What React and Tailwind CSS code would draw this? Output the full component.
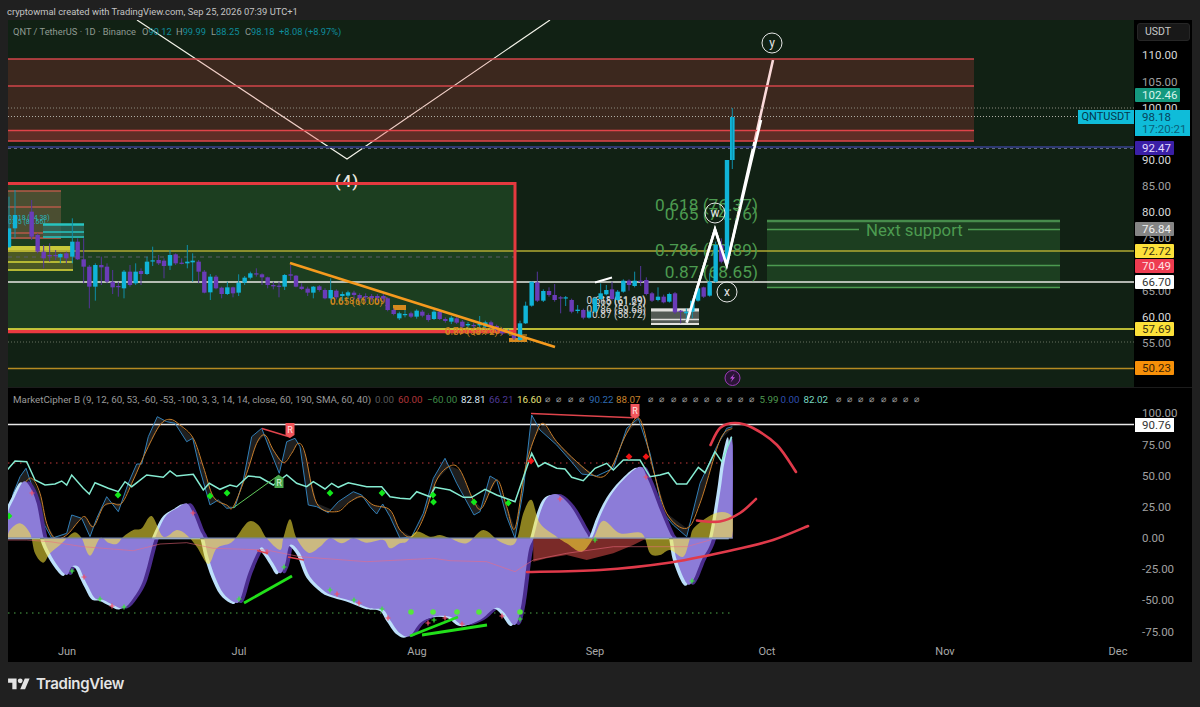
import React from 'react';

// zoomed crops were read at 3x, so points below are kept in crop coords and mapped back to the page
const left = (pts) => pts.map(([x, y]) => [x / 3, 390 + y / 3]);
const mid = (pts) => pts.map(([x, y]) => [400 + x / 3, 390 + y / 3]);
const toPoints = (pts) => pts.map(([x, y]) => `${x.toFixed(1)},${y.toFixed(1)}`).join(' ');

// catmull-rom through the points, the indicator curves are rounded in the picture
const smooth = (pts) => {
  let d = `M${pts[0][0].toFixed(1)},${pts[0][1].toFixed(1)}`;
  for (let i = 0; i < pts.length - 1; i++) {
    const p0 = pts[i - 1] || pts[i];
    const p1 = pts[i];
    const p2 = pts[i + 1];
    const p3 = pts[i + 2] || p2;
    const c1x = p1[0] + (p2[0] - p0[0]) / 6;
    const c1y = p1[1] + (p2[1] - p0[1]) / 6;
    const c2x = p2[0] - (p3[0] - p1[0]) / 6;
    const c2y = p2[1] - (p3[1] - p1[1]) / 6;
    d += ` C${c1x.toFixed(1)},${c1y.toFixed(1)} ${c2x.toFixed(1)},${c2y.toFixed(1)} ${p2[0].toFixed(1)},${p2[1].toFixed(1)}`;
  }
  return d;
};

const CYAN = '#10b4d8';
const PURPLE = '#6a3cb8';

// [x, bodyTop, bodyBottom, wickTop, wickBottom, up?]
const candlesLeft = [
  [27, 175, 232, 80, 232, 1], [45, 135, 175, 60, 205, 1], [95, 125, 200, 90, 210, 0], [113, 195, 245, 190, 250, 0],
  [131, 245, 265, 225, 295, 0], [149, 255, 258, 220, 275, 0], [167, 255, 258, 240, 270, 0], [181, 252, 262, 250, 280, 1],
  [199, 250, 265, 245, 280, 0], [217, 215, 260, 145, 280, 1], [233, 215, 268, 205, 270, 0], [251, 268, 290, 205, 340, 0],
  [268, 290, 350, 285, 415, 0], [286, 285, 350, 280, 392, 1], [304, 285, 292, 260, 345, 0], [321, 290, 335, 280, 340, 0],
  [338, 335, 352, 300, 372, 0], [355, 348, 351, 335, 380, 0], [372, 305, 355, 300, 385, 1], [390, 305, 345, 285, 350, 0],
  [407, 305, 340, 280, 345, 1], [423, 303, 312, 295, 345, 0], [441, 275, 312, 260, 315, 1], [458, 271, 274, 230, 288, 1],
  [476, 270, 280, 255, 285, 0], [492, 272, 288, 265, 325, 0], [510, 255, 287, 240, 300, 1], [527, 253, 280, 250, 285, 0],
  [545, 278, 281, 265, 283, 0], [562, 275, 280, 225, 295, 1], [578, 272, 277, 250, 335, 1], [596, 275, 305, 270, 340, 0],
  [613, 305, 368, 300, 370, 0], [631, 320, 367, 312, 390, 1], [648, 320, 355, 315, 358, 0], [665, 353, 372, 350, 385, 0],
  [682, 352, 372, 335, 375, 1], [699, 352, 370, 350, 382, 0], [716, 338, 368, 313, 378, 1], [734, 323, 338, 318, 345, 1],
  [751, 310, 323, 305, 328, 1], [769, 310, 313, 295, 320, 0], [786, 313, 322, 310, 345, 0], [803, 322, 345, 320, 355, 0],
  [820, 345, 349, 335, 358, 0], [837, 347, 350, 335, 382, 0], [854, 315, 350, 312, 360, 1], [872, 313, 317, 285, 330, 0],
  [888, 317, 350, 315, 352, 0], [905, 350, 357, 340, 360, 0], [923, 356, 368, 350, 378, 0], [940, 350, 368, 348, 385, 1],
  [958, 349, 360, 345, 365, 0], [975, 360, 385, 355, 388, 0], [992, 360, 385, 325, 390, 1], [1009, 362, 382, 358, 388, 0],
  [1027, 372, 378, 365, 392, 1], [1044, 367, 377, 362, 385, 1], [1062, 368, 375, 362, 388, 0], [1079, 375, 385, 370, 392, 0],
  [1097, 378, 382, 370, 395, 0], [1115, 378, 384, 372, 395, 0], [1132, 378, 384, 372, 395, 0], [1150, 378, 386, 372, 395, 0],
  [1163, 385, 420, 382, 424, 0], [1181, 420, 432, 415, 436, 0], [1198, 430, 445, 425, 450, 1],
];

const candlesMid = [
  [15, 432, 435, 420, 442, 1], [33, 430, 440, 425, 444, 0], [50, 422, 440, 418, 446, 1], [67, 425, 437, 420, 442, 0],
  [85, 435, 450, 430, 455, 0], [102, 425, 447, 420, 450, 1], [119, 425, 447, 420, 450, 0], [136, 447, 453, 442, 458, 0],
  [154, 443, 455, 438, 462, 1], [170, 445, 458, 440, 462, 0], [187, 455, 470, 450, 474, 0], [204, 462, 466, 456, 472, 1],
  [221, 465, 468, 458, 474, 0], [239, 462, 466, 438, 472, 1], [256, 457, 470, 452, 474, 1], [273, 457, 472, 452, 476, 0],
  [290, 468, 480, 464, 484, 0], [307, 478, 490, 474, 495, 0], [325, 484, 488, 478, 494, 1], [342, 490, 505, 486, 510, 0],
  [360, 460, 510, 452, 512, 1], [377, 407, 460, 395, 462, 1], [395, 335, 407, 335, 410, 1], [412, 337, 392, 305, 396, 0],
  [430, 363, 392, 358, 396, 1], [447, 363, 375, 352, 380, 0], [464, 375, 390, 342, 395, 0], [482, 382, 385, 378, 430, 0],
  [497, 382, 385, 378, 408, 1], [515, 390, 425, 386, 430, 0], [533, 419, 423, 405, 430, 1], [550, 420, 443, 416, 448, 0],
  [567, 425, 443, 420, 446, 1], [585, 385, 425, 380, 430, 1], [602, 370, 387, 340, 390, 1], [619, 360, 373, 345, 376, 1],
  [636, 358, 387, 335, 392, 0], [653, 365, 390, 360, 394, 1], [670, 332, 365, 328, 368, 1], [687, 332, 345, 328, 362, 0],
  [704, 332, 348, 305, 352, 1], [722, 332, 336, 288, 348, 0], [739, 330, 372, 322, 376, 0], [756, 370, 392, 366, 396, 0],
  [774, 380, 390, 352, 394, 1], [791, 380, 397, 374, 400, 0], [808, 372, 395, 368, 398, 1], [825, 370, 427, 366, 432, 0],
  [842, 422, 426, 420, 460, 0], [859, 425, 430, 415, 450, 1], [877, 392, 425, 388, 445, 1], [894, 355, 392, 352, 395, 1],
  [911, 352, 380, 350, 384, 0], [929, 335, 377, 310, 380, 1], [947, 225, 335, 215, 338, 1], [964, 225, 275, 205, 280, 0],
];

const lavender = [
  ...left([[22, 445], [22, 375], [45, 320], [70, 275], [90, 290], [110, 340], [130, 440], [150, 490], [175, 530], [200, 555], [215, 530], [235, 530], [250, 560], [265, 590], [285, 625], [310, 630], [340, 645], [370, 655], [400, 625], [430, 570], [460, 460], [480, 410], [500, 375], [530, 355], [560, 340], [580, 370], [600, 420], [612, 445], [625, 500], [645, 560], [670, 610], [700, 635], [720, 630], [745, 550], [780, 475], [800, 490], [820, 520], [840, 550], [855, 525], [870, 465], [900, 490], [930, 560], [975, 605], [1010, 620], [1060, 635], [1110, 655], [1150, 660], [1170, 690], [1200, 730]]),
  ...mid([[30, 738], [60, 700], [100, 680], [150, 680], [190, 705], [240, 690], [285, 655], [310, 665], [345, 705], [365, 640], [385, 490], [400, 445], [420, 370], [440, 325], [465, 312], [490, 325], [520, 360], [560, 430], [575, 445], [600, 380], [630, 320], [670, 270], [720, 230], [745, 270], [780, 360], [810, 430], [818, 445], [830, 510], [860, 580], [880, 570], [905, 510], [935, 450], [960, 310], [975, 210], [997, 150], [997, 445]]),
];

const moneyFlow = [
  ...left([[22, 445], [30, 420], [60, 400], [90, 430], [105, 490], [130, 518], [150, 490], [180, 465], [205, 440], [225, 427], [245, 445], [270, 497], [300, 445], [325, 458], [350, 462], [370, 440], [400, 420], [425, 415], [455, 378], [490, 440], [530, 420], [560, 435], [590, 470], [625, 522], [650, 475], [690, 460], [710, 440], [745, 395], [775, 405], [800, 445], [840, 480], [850, 445], [870, 388], [890, 445], [925, 488], [960, 470], [990, 445], [1025, 460], [1060, 445], [1100, 458], [1150, 450], [1170, 475], [1200, 460]]),
  ...mid([[20, 455], [50, 425], [90, 440], [120, 435], [150, 445], [200, 460], [250, 420], [300, 455], [345, 460], [370, 370], [395, 330], [420, 400], [470, 440], [500, 460], [545, 485], [580, 445], [610, 392], [660, 430], [725, 430], [750, 490], [780, 495], [810, 480], [850, 500], [870, 445], [885, 410], [950, 368], [997, 380], [997, 445]]),
];

const redFlow = mid([[400, 445], [400, 515], [440, 505], [500, 495], [560, 510], [640, 490], [700, 465], [740, 445]]);

const blue = [
  ...left([[22, 395], [40, 310], [60, 260], [78, 235], [100, 300], [125, 390], [155, 445], [200, 430], [215, 375], [245, 385], [270, 440], [290, 385], [320, 320], [355, 365], [385, 280], [410, 222], [425, 222], [445, 140], [472, 80], [500, 95], [525, 100], [560, 155], [578, 145], [600, 240], [630, 345], [655, 330], [680, 355], [705, 352], [730, 270], [755, 140], [785, 115], [810, 180], [838, 250], [860, 155], [885, 145], [900, 170], [925, 345], [950, 350], [985, 368], [1015, 335], [1060, 305], [1085, 315], [1110, 350], [1130, 372], [1148, 342], [1170, 380], [1200, 445]]),
  ...mid([[35, 440], [70, 370], [100, 265], [135, 205], [170, 280], [222, 375], [240, 365], [270, 258], [290, 270], [320, 380], [345, 445], [370, 300], [395, 75], [420, 120], [470, 165], [510, 210], [545, 252], [590, 258], [640, 235], [680, 115], [715, 85], [750, 190], [790, 370], [820, 405], [860, 440], [900, 280], [950, 170], [980, 115], [997, 110]]),
];

const orange = [
  ...left([[22, 400], [45, 330], [70, 285], [95, 265], [120, 310], [140, 400], [165, 445], [200, 435], [235, 395], [255, 380], [280, 410], [310, 350], [335, 340], [365, 340], [400, 270], [440, 180], [480, 105], [510, 88], [540, 105], [580, 145], [610, 230], [640, 320], [680, 345], [700, 350], [740, 250], [770, 160], [795, 135], [820, 180], [850, 218], [875, 190], [895, 160], [915, 190], [950, 340], [1010, 365], [1050, 335], [1085, 320], [1120, 345], [1170, 360], [1200, 420]]),
  ...mid([[35, 440], [70, 385], [110, 270], [150, 228], [180, 240], [220, 330], [245, 355], [290, 270], [320, 350], [345, 415], [375, 240], [405, 140], [430, 100], [470, 155], [530, 215], [590, 260], [630, 240], [680, 130], [720, 88], [760, 240], [800, 370], [860, 415], [900, 340], [960, 150], [997, 115]]),
];

const teal = [
  ...left([[22, 240], [45, 213], [80, 215], [105, 270], [135, 285], [165, 282], [185, 273], [200, 285], [215, 255], [250, 295], [268, 312], [285, 278], [325, 295], [355, 305], [375, 275], [395, 290], [440, 255], [490, 262], [510, 243], [530, 258], [580, 253], [610, 300], [628, 280], [660, 298], [690, 285], [710, 290], [745, 258], [780, 262], [820, 285], [860, 255], [890, 280], [920, 290], [940, 275], [975, 297], [995, 280], [1015, 292], [1045, 278], [1100, 290], [1145, 290], [1170, 320], [1200, 325]]),
  ...mid([[30, 327], [50, 305], [90, 320], [105, 292], [150, 300], [190, 322], [215, 322], [255, 298], [290, 315], [345, 335], [395, 190], [415, 230], [435, 218], [470, 235], [495, 237], [515, 262], [550, 272], [585, 235], [620, 220], [640, 240], [670, 210], [720, 210], [750, 260], [780, 255], [805, 248], [830, 282], [860, 282], [895, 232], [915, 248], [945, 185], [965, 215], [995, 140]]),
];

const pinkLine = [
  ...left([[22, 450], [80, 450], [150, 455], [250, 470], [400, 482], [480, 462], [560, 458], [640, 475], [800, 480], [900, 500], [1100, 515], [1200, 510]]),
  ...mid([[100, 505], [150, 512], [260, 515], [345, 545], [400, 510], [500, 490], [640, 470], [860, 470], [930, 450]]),
];

const priceLabels = [
  { y: 55, t: '110.00', c: 'text-[#d8d8d8]' }, { y: 82, t: '105.00', c: 'text-[#a0a0a0]' }, { y: 108, t: '100.00', c: 'text-[#d8d8d8]' },
  { y: 160, t: '90.00', c: 'text-[#d8d8d8]' }, { y: 186, t: '85.00', c: 'text-[#a0a0a0]' }, { y: 212, t: '80.00', c: 'text-[#d8d8d8]' },
  { y: 238, t: '75.00', c: 'text-[#a0a0a0]' }, { y: 291, t: '65.00', c: 'text-[#a0a0a0]' }, { y: 317, t: '60.00', c: 'text-[#d8d8d8]' },
  { y: 343, t: '55.00', c: 'text-[#a0a0a0]' },
];

const priceBadges = [
  { y: 95, t: '102.46', c: 'w-[45px] bg-[#14997f] text-[#d8f4ec]' },
  { y: 147.5, t: '92.47', c: 'w-[39px] bg-[#3a1fa6] text-[#e4dcff]' },
  { y: 229, t: '76.84', c: 'w-[39px] bg-[#858585] text-[#f0f0f0]' },
  { y: 251, t: '72.72', c: 'w-[39px] bg-[#fde13a] text-[#3a3210]' },
  { y: 265.5, t: '70.49', c: 'w-[39px] bg-[#ee3b50] text-[#ffe0e4]' },
  { y: 282, t: '66.70', c: 'w-[39px] bg-white text-[#333333]' },
  { y: 329, t: '57.69', c: 'w-[39px] bg-[#fde13a] text-[#3a3210]' },
  { y: 368, t: '50.23', c: 'w-[39px] bg-[#f79009] text-[#3a2405]' },
];

const lowerLabels = [
  { y: 413, t: '100.00' }, { y: 445, t: '75.00' }, { y: 476, t: '50.00' }, { y: 507, t: '25.00' },
  { y: 538, t: '0.00' }, { y: 569, t: '-25.00' }, { y: 600, t: '-50.00' }, { y: 632, t: '-75.00' },
];

const months = [['Jun', 67], ['Jul', 239], ['Aug', 417], ['Sep', 595], ['Oct', 767], ['Nov', 945], ['Dec', 1118]];

const Candles = ({ list, x0, y0 }) =>
  list.map(([x, a, b, h, l, up]) => {
    const cx = x0 + x / 3;
    const color = up ? CYAN : PURPLE;
    return (
      <g key={`${x0}-${x}`}>
        <line x1={cx} x2={cx} y1={y0 + h / 3} y2={y0 + l / 3} stroke={up ? '#0e8ea8' : '#54369a'} strokeWidth="1" />
        <rect x={cx - 2.2} y={y0 + a / 3} width="4.4" height={Math.max((b - a) / 3, 1.2)} fill={color} />
      </g>
    );
  });

const Circled = ({ x, y, r, children, size }) => (
  <g>
    <circle cx={x} cy={y} r={r} fill="none" stroke="#e6e6e6" strokeWidth="1" />
    <text x={x} y={y + size * 0.32} fontSize={size} textAnchor="middle" fill="#e6e6e6">{children}</text>
  </g>
);

const Hline = ({ y, x1 = 8, x2 = 1134, color, w = 1.5, dash }) => (
  <line x1={x1} x2={x2} y1={y} y2={y} stroke={color} strokeWidth={w} strokeDasharray={dash} />
);

const PriceChart = () => (
  <svg className="block w-full h-full" viewBox="8 20 1126 367">
    <rect x="8" y="20" width="1126" height="367" fill="#112114" />
    <rect x="8" y="183" width="507" height="148" fill="#1c3e20" />

    {/* big wave lines sit under the resistance zone, it tints them pink */}
    <polyline points="137,20 347,159 550,20" fill="none" stroke="#f2f2e8" strokeWidth="1.2" />
    <polyline points="686.7,322.7 715,229.3 726.7,265 773,60" fill="none" stroke="#ffffff" strokeWidth="2.6" strokeLinejoin="miter" />

    <rect x="8" y="59" width="966" height="82" fill="rgb(233,68,70)" fillOpacity="0.2" />
    <rect x="8" y="130" width="966" height="11" fill="rgb(233,68,70)" fillOpacity="0.2" />
    <Hline y={59} x2={974} color="#d2444a" />
    <Hline y={86} x2={974} color="#d2444a" />
    <Hline y={130.5} x2={974} color="#e0444a" />
    <Hline y={141} x2={974} color="#e0444a" />
    <Hline y={108} color="#8c8c80" w={1} dash="1 2" />
    <Hline y={116.5} color="#b0b0a8" w={1} dash="1 2" />
    <Hline y={147} color="#2d3870" w={2} />
    <Hline y={148.5} color="#606880" w={1} dash="3 3" />

    {/* next support box */}
    <rect x="767" y="220" width="293" height="68" fill="#1c3e20" />
    <Hline y={221} x1={767} x2={1060} color="#478c4c" w={2.4} />
    <Hline y={229.5} x1={767} x2={859} color="#4c9b50" />
    <Hline y={229.5} x1={968} x2={1060} color="#4c9b50" />
    <Hline y={265.5} x1={767} x2={1060} color="#4c9b50" />
    <Hline y={287.5} x1={767} x2={1060} color="#4c9b50" />
    <text x="866" y="235.5" fontSize="16.8" fill="#4c9b50">Next support</text>

    {/* old boxes on the left edge */}
    <rect x="8" y="191" width="53" height="48" fill="#6b5a3e" fillOpacity="0.6" />
    <Hline y={191} x2={61} color="#b55a48" />
    <Hline y={207} x2={61} color="#b55a48" />
    <Hline y={233} x2={43} color="#b55a48" />
    <Hline y={238} x2={61} color="#b55a48" />
    <rect x="43" y="224" width="41" height="14" fill="#2f6a62" fillOpacity="0.7" />
    <Hline y={224.5} x1={43} x2={84} color="#27c4c0" w={2.4} />
    <Hline y={232} x1={43} x2={84} color="#27c4c0" />
    <Hline y={237} x1={43} x2={84} color="#27c4c0" />
    <rect x="8" y="246" width="65" height="25" fill="#6a6a28" fillOpacity="0.6" />
    <rect x="8" y="246" width="65" height="6" fill="#c8c83a" />
    <Hline y={262} x2={73} color="#d8d83a" />
    <Hline y={270} x2={73} color="#d8d83a" />
    <text x="8" y="220" fontSize="7" fill="#29b5bd">0.618 (84.38)</text>
    <text x="8" y="224" fontSize="7" fill="#29b5bd">0.65 (83.66)</text>

    <Hline y={257} x2={515} color="#5a5a68" w={1} dash="4 4" />
    <Hline y={251} color="#b0aa32" />
    <Hline y={282} color="#e8e8e4" />
    <Hline y={331.5} x2={515} color="#ea3a40" w={3.4} />
    <Hline y={329} color="#f5ee40" />
    <Hline y={342} color="#66705e" w={1} dash="1 2" />
    <Hline y={368.5} color="#b58a22" />

    {/* fib labels, the candles paint over them */}
    <g fontSize="17.3" fill="#4c9b50" textAnchor="end">
      <text x="758" y="211">0.618 (76.37)</text>
      <text x="758" y="220">0.65 (74.76)</text>
      <text x="758" y="256">0.786 (70.89)</text>
      <text x="758" y="278">0.87 (68.65)</text>
    </g>
    <g fontSize="10" fill="#d2d2d2" textAnchor="end">
      <text x="646" y="304">0.618 (61.69)</text>
      <text x="646" y="304.5">0.65 (61.29)</text>
      <text x="646" y="313">0.786 (59.68)</text>
      <text x="646" y="318">0.87 (58.72)</text>
    </g>
    <g fontSize="9.8" fill="#d68a1e">
      <text x="330" y="304">0.618 (61.69)</text>
      <text x="330" y="304.5">0.65 (61.00)</text>
      <text x="445" y="334">0.786 (59.60)</text>
      <text x="445" y="334.5">0.87 (58.72)</text>
    </g>
    <rect x="651" y="308" width="48" height="17" fill="#8a8a88" fillOpacity="0.55" />
    <Hline y={310} x1={651} x2={699} color="#e0e0dc" w={3} />
    <Hline y={319.5} x1={651} x2={699} color="#e0e0dc" />
    <Hline y={324} x1={651} x2={699} color="#e0e0dc" w={2} />

    <rect x="393" y="305" width="13" height="5" fill="#d68a1e" />
    <rect x="509" y="338" width="18" height="4" fill="#d68a1e" />
    <polyline points="509,335 527,335" fill="none" stroke="#d68a1e" strokeWidth="1.2" />

    <Candles list={candlesLeft} x0={0} y0={170} />
    <Candles list={candlesMid} x0={400} y0={170} />
    <line x1="727" x2="727" y1="160" y2="263" stroke={CYAN} strokeWidth="4.4" />
    <rect x="730" y="117" width="4.6" height="43" fill={CYAN} />
    <line x1="732.3" x2="732.3" y1="108" y2="169" stroke="#0e8ea8" strokeWidth="1" />

    {/* redraw the leg that runs in front of the candles */}
    <polyline points="686.7,322.7 715,229.3 726.7,265 761,120" fill="none" stroke="#ffffff" strokeWidth="2.6" />
    <line x1="290" y1="263" x2="555" y2="347" stroke="#f59a1e" strokeWidth="2.6" />
    <line x1="595" y1="282.5" x2="612" y2="277.5" stroke="#ffffff" strokeWidth="2" />

    <text x="347" y="187" fontSize="17" fontWeight="500" fill="#e8e8e0" textAnchor="middle" letterSpacing="1">(4)</text>
    <Hline y={183.5} x2={515} color="#e5393f" w={3} />
    <line x1="515" x2="515" y1="182" y2="333" stroke="#e5393f" strokeWidth="3" />

    <Circled x={772} y={43} r={10} size={12}>y</Circled>
    <Circled x={715} y={213} r={10} size={12}>w</Circled>
    <Circled x={727} y={292} r={10} size={12}>x</Circled>

    <circle cx="732.5" cy="378" r="7.5" fill="#2a1436" stroke="#9c3bb8" strokeWidth="1" />
    <path d="M734.5,373.5 L730,378.5 L732.5,378.5 L730.5,382.5 L735,377.3 L732.5,377.3 Z" fill="#c050e0" />
  </svg>
);

const Plus = ({ x, y, c }) => (
  <path d={`M${x - 2.5},${y} H${x + 2.5} M${x},${y - 2.5} V${y + 2.5}`} stroke={c} strokeWidth="1.2" fill="none" />
);

const Diamond = ({ x, y, c = '#12e81a' }) => (
  <rect x={x - 2.4} y={y - 2.4} width="4.8" height="4.8" fill={c} transform={`rotate(45 ${x} ${y})`} />
);

const Oscillator = () => (
  <svg className="block w-full h-full" viewBox="8 388 1126 252">
    <defs>
      <clipPath id="waves"><rect x="8" y="388" width="725" height="252" /></clipPath>
    </defs>
    <rect x="8" y="388" width="1126" height="252" fill="#000000" />
    <Hline y={424.5} color="#e8e8e8" />
    <Hline y={463} x2={733} color="#c03a3a" w={1} dash="1.5 4.5" />
    <Hline y={613} x2={733} color="#4ea84a" w={1} dash="1.5 4.5" />

    <polygon points={toPoints([...blue, ...[...orange].reverse()])} fill="#ffffff" fillOpacity="0.12" />
    <polyline points={toPoints(blue)} fill="none" stroke="#307fb8" strokeWidth="1" />
    <path d={smooth(orange)} fill="none" stroke="#c97e2a" strokeWidth="1" />

    <g clipPath="url(#waves)">
      <g transform="translate(4,0)"><path d={`${smooth(lavender)} Z`} fill="#4b2d8e" /></g>
      <g transform="translate(-3.5,1)"><path d={`${smooth(lavender)} Z`} fill="#bcdffa" /></g>
      <path d={`${smooth(lavender)} Z`} fill="#8c7cd8" />
      <polygon points={toPoints(redFlow)} fill="#7a2a28" />
      <path d={`${smooth(moneyFlow)} Z`} fill="#ffeb3b" fillOpacity="0.55" />
    </g>
    <polyline points={toPoints(pinkLine)} fill="none" stroke="#f06a80" strokeOpacity="0.55" strokeWidth="1" />
    <Hline y={538} x2={733} color="#6f86b8" w={1.2} />

    <polyline points={toPoints(teal)} fill="none" stroke="#86ecd2" strokeWidth="1.5" />

    {[[9, 516], [118, 495], [210, 496], [227, 493], [330, 493], [382, 493], [433, 495], [433.5, 502], [474, 502], [508.3, 503]].map(([x, y]) => (
      <Diamond key={`${x}-${y}`} x={x} y={y} />
    ))}
    {[[531, 461], [629, 456.7], [646, 456.7]].map(([x, y]) => <Diamond key={x} x={x} y={y} c="#f01414" />)}
    {[[411, 612], [433, 612], [457, 612], [479, 612], [520, 612]].map(([x, y]) => (
      <circle key={x} cx={x} cy={y} r="2.8" fill="#55e83a" />
    ))}
    {[[72, 571], [100, 599], [124, 607], [239, 599], [284, 567], [330, 590], [354, 600], [382, 609], [434, 620], [520, 619], [595, 540], [692, 581]].map(([x, y]) => (
      <Plus key={x} x={x} y={y} c="#38e838" />
    ))}
    {[[84, 577], [112, 606], [267, 552], [337, 594], [359, 603], [388, 618], [428, 623], [445, 618], [462, 624], [502, 616], [560, 499], [646, 477], [32, 493], [193, 513]].map(([x, y]) => (
      <Plus key={x} x={x} y={y} c="#f0506a" />
    ))}

    {/* hand drawn bits */}
    <path d={smooth([[710.5, 445], [720, 428], [735, 423], [753, 428], [777, 445], [796, 472]])} fill="none" stroke="#e03a4a" strokeWidth="2.6" strokeLinecap="round" />
    <path d={smooth([[697, 520.5], [720, 521.5], [740, 513], [756, 499]])} fill="none" stroke="#e03a4a" strokeWidth="2.6" strokeLinecap="round" />
    <path d={smooth([[527, 572], [600, 570], [667, 563], [733, 550], [773, 540], [808, 526]])} fill="none" stroke="#e03a4a" strokeWidth="2.6" strokeLinecap="round" />
    <line x1="244" y1="603" x2="292" y2="576" stroke="#22e01a" strokeWidth="2.8" />
    <line x1="410" y1="636" x2="458" y2="617" stroke="#22e01a" strokeWidth="2.8" />
    <line x1="422" y1="635" x2="487" y2="625" stroke="#22e01a" strokeWidth="2.8" />

    <line x1="531" y1="413.5" x2="633" y2="417.7" stroke="#e0444c" strokeWidth="1.4" />
    <line x1="262" y1="428.5" x2="290" y2="437" stroke="#e0444c" strokeWidth="1.4" />
    <line x1="257" y1="550.5" x2="268" y2="553.5" stroke="#e0444c" strokeWidth="1.6" />
    <line x1="288" y1="557" x2="304" y2="560" stroke="#e0444c" strokeWidth="1.6" />
    <line x1="233" y1="508" x2="279" y2="475" stroke="#5fc85a" strokeWidth="1" />

    <path d="M630.5,404 h9 v12 l-4.5,3 l-4.5,-3 z" fill="#f2555a" />
    <text x="635" y="414" fontSize="9" fill="#ffe4e4" textAnchor="middle">R</text>
    <path d="M285.5,423 h9 v12 l-4.5,3 l-4.5,-3 z" fill="#f2555a" />
    <text x="290" y="433" fontSize="9" fill="#ffe4e4" textAnchor="middle">R</text>
    <path d="M279,475 l4.5,3 v10 h-9 v-10 z" fill="#4aa84e" />
    <text x="279" y="486" fontSize="9" fill="#d8f0d8" textAnchor="middle">R</text>
  </svg>
);

const nulls = (n) => Array.from({ length: n }, (_, i) => (
  <span key={i} className="w-[11.25px] text-center text-[#a0a0a0] text-[9px]">⌀</span>
));

const IndicatorLegend = () => (
  <div className="absolute left-[5px] top-[5px] flex items-center text-[9.8px] leading-[13px] whitespace-nowrap text-[#9a9a9a]">
    <span className="w-[362px]">MarketCipher B (9, 12, 60, 53, -60, -53, -100, 3, 3, 14, 14, close, 60, 190, SMA, 60, 40)</span>
    <span className="w-[23px] text-[#5a5a5a]">0.00</span>
    <span className="w-[29px] text-[#b0363a]">60.00</span>
    <span className="w-[34px] text-[#3f8a48]">−60.00</span>
    <span className="w-[28px] text-[#d8e6f0]">82.81</span>
    <span className="w-[28px] text-[#4e3a96]">66.21</span>
    <span className="w-[25px] text-[#e6e07a]">16.60</span>
    {nulls(4)}
    <span className="w-[29px] pl-[2px] text-[#2f6ab0]">90.22</span>
    <span className="w-[29px] text-[#c9822c]">88.07</span>
    {nulls(10)}
    <span className="w-[23px] pl-[2px] text-[#4f9a50]">5.99</span>
    <span className="w-[23px] text-[#2f4fb0]">0.00</span>
    <span className="w-[29px] text-[#79d8c0]">82.02</span>
    {nulls(8)}
  </div>
);

const Logo = () => (
  <svg viewBox="0 0 36 28" className="w-[22px] h-[17px] fill-[#e4e4e4]">
    <path d="M14 22H7V11H0V4h14v18zM28 22h-8l7.5-18h8L28 22z" />
    <circle cx="20" cy="8" r="4" />
  </svg>
);

export default function App() {
  return (
    <div className="w-full h-[707px] overflow-hidden flex flex-col bg-[#202020] font-[family-name:Roboto,sans-serif]">
      <div className="h-[20px] pl-[7px] pt-[5px] text-[9.4px] leading-[13px] text-[#c4c4c4] whitespace-nowrap">
        cryptowmal created with TradingView.com, Sep 25, 2026 07:39 UTC+1
      </div>

      <div className="ml-[8px] mr-[8px] flex flex-col">
        <div className="h-[367px] flex">
          <div className="relative flex-1 min-w-0">
            <PriceChart />
            <div className="absolute left-[5px] top-[5px] flex text-[9.3px] leading-[13px] whitespace-nowrap text-[#8f9a92]">
              <span className="w-[129px]">QNT / TetherUS · 1D · Binance</span>
              <span className="w-[34px]">O<span className="text-[#0e8c9c]">90.12</span></span>
              <span className="w-[35px]">H<span className="text-[#0e8c9c]">99.99</span></span>
              <span className="w-[34px]">L<span className="text-[#0e8c9c]">88.25</span></span>
              <span className="w-[34px]">C<span className="text-[#0e8c9c]">98.18</span></span>
              <span className="text-[#0e8c9c]">+8.08 (+8.97%)</span>
            </div>
            <div className="absolute right-0 top-[90px] h-[14px] w-[56px] bg-[#0fbcd9] text-[11px] leading-[14px] text-center text-[#06364a]">QNTUSDT</div>
          </div>

          <div className="relative w-[58px] bg-black text-[11.5px]">
            <div className="absolute left-[3px] top-[3px] w-[53px] h-[18px] pl-[7px] rounded-[3px] border border-[#262626] bg-[#181818] text-[#c8c8c8] text-[10.5px] leading-[16px]">USDT</div>
            {priceLabels.map((l) => (
              <span key={l.t} className={`absolute left-[8px] -translate-y-1/2 leading-[13px] ${l.c}`} style={{ top: l.y - 20 }}>{l.t}</span>
            ))}
            {priceBadges.map((b) => (
              <span key={b.t} className={`absolute left-[1px] h-[14px] pl-[7px] -translate-y-1/2 leading-[14px] rounded-[1px] ${b.c}`} style={{ top: b.y - 20 }}>{b.t}</span>
            ))}
            <div className="absolute left-[1px] top-[90px] w-[55px] h-[26px] pl-[7px] pt-[1px] bg-[#0fbcd9] leading-[12px]">
              <div className="text-[#06445c]">98.18</div>
              <div className="text-[#0a5f78]">17:20:21</div>
            </div>
          </div>
        </div>

        <div className="h-px bg-[#1c1c1c]" />

        <div className="h-[252px] flex">
          <div className="relative flex-1 min-w-0">
            <Oscillator />
            <IndicatorLegend />
          </div>
          <div className="relative w-[58px] bg-black text-[11.5px] text-[#a0a0a0]">
            {lowerLabels.map((l) => (
              <span key={l.t} className="absolute left-[8px] -translate-y-1/2 leading-[13px]" style={{ top: l.y - 388 }}>{l.t}</span>
            ))}
            <span className="absolute left-[1px] top-[30px] h-[14px] w-[39px] pl-[7px] leading-[14px] bg-white text-[#333333]">90.76</span>
          </div>
        </div>

        <div className="relative h-[22px] bg-black text-[11px] text-[#a8a8a8]">
          {months.map(([m, x]) => (
            <span key={m} className="absolute top-[5px] -translate-x-1/2 leading-[13px]" style={{ left: x - 8 }}>{m}</span>
          ))}
        </div>
      </div>

      <div className="flex-1 flex items-center gap-[6px] pl-[8px] pb-[1px]">
        <Logo />
        <span className="font-[family-name:Inter,sans-serif] text-[15px] font-semibold tracking-[-0.3px] text-[#e4e4e4]">TradingView</span>
      </div>
    </div>
  );
}
